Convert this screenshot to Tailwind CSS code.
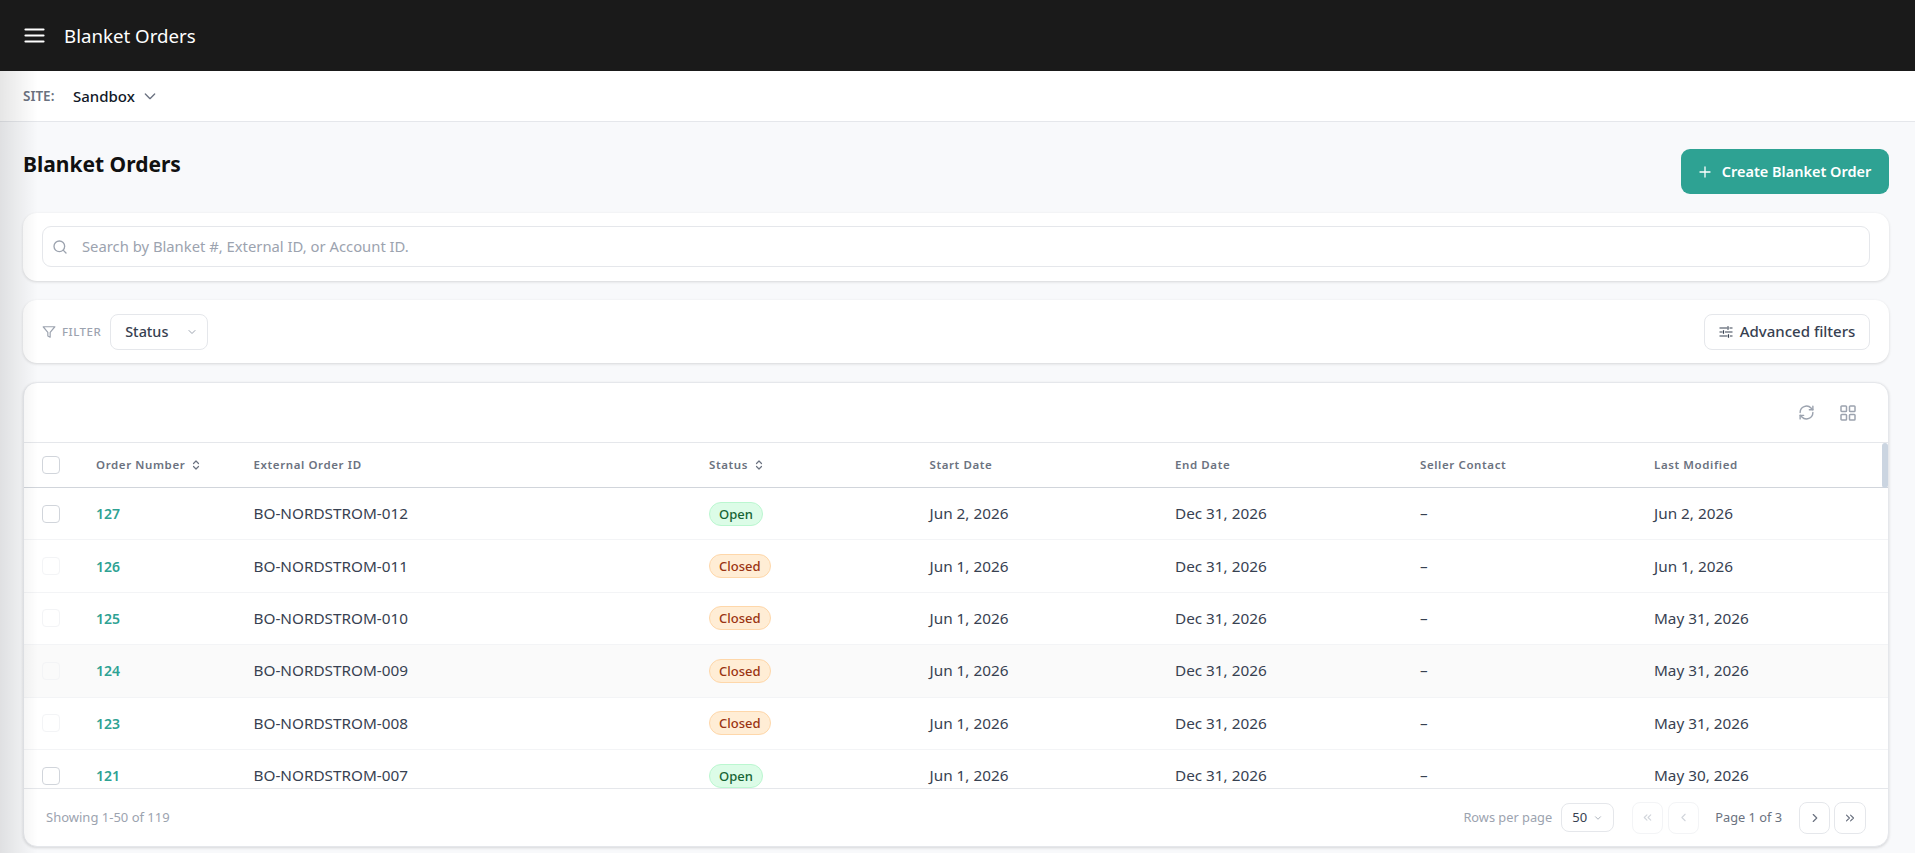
<!DOCTYPE html>
<html>
<head>
<meta charset="utf-8">
<title>Blanket Orders</title>
<script src="https://cdn.jsdelivr.net/npm/@tailwindcss/browser@4"></script>
</head>
<body class="h-[853px] w-[1915px] overflow-hidden bg-[#f8f9fb] font-['Noto_Sans',sans-serif] text-[#111827]">
<div class="relative flex h-[853px] flex-col">
  <header class="flex h-[71px] shrink-0 items-center gap-[19px] bg-[#1a1a1a] pl-[24px] text-white">
    <svg class="h-[21px] w-[21px]" viewBox="0 0 21 21" fill="none" stroke="currentColor" stroke-width="2.2" stroke-linecap="round"><path d="M1.5 4.5h18M1.5 10.5h18M1.5 16.5h18"/></svg>
    <span class="text-[18.7px] leading-[28px]">Blanket Orders</span>
  </header>
  <div class="flex h-[51px] shrink-0 items-center border-b border-[#e5e7eb] bg-white pl-[23px]">
    <span class="w-[50px] text-[13.5px] font-semibold text-[#6b7280]">SITE:</span>
    <span class="text-[15px] font-medium text-[#111827]">Sandbox</span>
    <svg class="ml-[7px] h-[16px] w-[16px] text-[#6b7280]" viewBox="0 0 24 24" fill="none" stroke="currentColor" stroke-width="2" stroke-linecap="round" stroke-linejoin="round"><path d="m5 9 7 7 7-7"/></svg>
  </div>
  <main class="flex min-h-0 flex-1 flex-col px-[23px] pt-[27px] pr-[26px]">
    <div class="flex h-[64px] shrink-0 items-start justify-between">
      <h1 class="text-[21px] leading-[31px] font-bold text-[#111111]">Blanket Orders</h1>
      <button class="flex h-[45px] w-[208px] items-center justify-center gap-[11px] rounded-[9px] bg-[#2ea293] text-[14.5px] font-semibold text-white">
        <svg class="h-[12px] w-[12px]" viewBox="0 0 12 12" fill="none" stroke="currentColor" stroke-width="1.3" stroke-linecap="round"><path d="M6 1v10M1 6h10"/></svg>
        Create Blanket Order
      </button>
    </div>
    <section class="h-[68px] shrink-0 rounded-[14px] bg-white px-[19px] py-[13px] shadow-[0_1px_3px_rgba(0,0,0,0.14)]">
      <div class="flex h-[41px] items-center rounded-[9px] border border-[#e5e7eb] pl-[9px]">
        <svg class="h-[16px] w-[16px] text-[#9ca3af]" viewBox="0 0 24 24" fill="none" stroke="currentColor" stroke-width="2" stroke-linecap="round"><circle cx="11" cy="11" r="8"/><path d="m21 21-4.3-4.3"/></svg>
        <span class="ml-[14px] text-[14.8px] text-[#9ca3af]">Search by Blanket #, External ID, or Account ID.</span>
      </div>
    </section>
    <section class="mt-[19px] flex h-[63px] shrink-0 items-center justify-between rounded-[14px] bg-white pr-[19px] pl-[19px] shadow-[0_1px_3px_rgba(0,0,0,0.14)]">
      <div class="flex items-center">
        <svg class="h-[14px] w-[14px] text-[#9ca3af]" viewBox="0 0 24 24" fill="none" stroke="currentColor" stroke-width="2" stroke-linecap="round" stroke-linejoin="round"><path d="M22 3H2l8 9.5V19l4 2v-8.5z"/></svg>
        <span class="ml-[6px] text-[11.5px] font-medium tracking-[0.5px] text-[#9ca3af]">FILTER</span>
        <div class="ml-[9px] flex h-[36px] w-[98px] items-center justify-between rounded-[8px] border border-[#e5e7eb] pr-[9px] pl-[14px] text-[14.4px] font-medium text-[#374151]">
          Status
          <svg class="h-[12px] w-[12px] text-[#9ca3af]" viewBox="0 0 24 24" fill="none" stroke="currentColor" stroke-width="2" stroke-linecap="round" stroke-linejoin="round"><path d="m6 9 6 6 6-6"/></svg>
        </div>
      </div>
      <button class="flex h-[36px] w-[166px] items-center justify-center gap-[7px] rounded-[8px] border border-[#e5e7eb] text-[15px] font-medium text-[#374151]">
        <svg class="h-[14px] w-[14px]" viewBox="0 0 14 14" fill="none" stroke="currentColor" stroke-width="1.2"><path d="M.5 3h7.5M10.5 3h3M9 1.3v3.4M.5 7h3M6 7h7.5M4.5 5.3v3.4M.5 11h8M11 11h2.5M9.5 9.3v3.4"/></svg>
        Advanced filters
      </button>
    </section>
    <section class="relative mt-[19px] flex h-[465px] shrink-0 flex-col overflow-hidden rounded-[14px] border border-[#e5e7eb] bg-white shadow-[0_1px_3px_rgba(0,0,0,0.14)]">
      <div class="flex h-[60px] shrink-0 items-center justify-end gap-[25px] border-b border-[#e5e7eb] pr-[32px] text-[#9ca3af]">
        <svg class="h-[17px] w-[17px]" viewBox="0 0 24 24" fill="none" stroke="currentColor" stroke-width="2" stroke-linecap="round" stroke-linejoin="round"><path d="M3 12a9 9 0 0 1 15.5-6.2L21 8"/><path d="M21 3v5h-5"/><path d="M21 12a9 9 0 0 1-15.5 6.2L3 16"/><path d="M8 16H3v5"/></svg>
        <svg class="h-[16px] w-[16px]" viewBox="0 0 16 16" fill="none" stroke="currentColor" stroke-width="1.5"><rect x="1" y="1" width="5.5" height="5.5" rx=".8"/><rect x="9.5" y="1" width="5.5" height="5.5" rx=".8"/><rect x="1" y="9.5" width="5.5" height="5.5" rx=".8"/><rect x="9.5" y="9.5" width="5.5" height="5.5" rx=".8"/></svg>
      </div>
      <div class="min-h-0 flex-1 overflow-hidden">
        <div class="grid h-[45px] grid-cols-[54px_157.5px_455.5px_220.5px_245.5px_245px_234px_1fr] items-center border-b border-[#d1d5db] pl-[18px] text-[11.5px] font-semibold tracking-[0.6px] text-[#6b7280]">
          <span class="h-[18px] w-[18px] rounded-[4px] border border-[#d1d5db]"></span>
          <span class="flex items-center gap-[5px]">Order Number
            <svg class="h-[12px] w-[12px]" viewBox="0 0 24 24" fill="none" stroke="currentColor" stroke-width="2.4" stroke-linecap="round" stroke-linejoin="round"><path d="m7 9 5-5 5 5M7 15l5 5 5-5"/></svg></span>
          <span>External Order ID</span>
          <span class="flex items-center gap-[5px]">Status
            <svg class="h-[12px] w-[12px]" viewBox="0 0 24 24" fill="none" stroke="currentColor" stroke-width="2.4" stroke-linecap="round" stroke-linejoin="round"><path d="m7 9 5-5 5 5M7 15l5 5 5-5"/></svg></span>
          <span>Start Date</span><span>End Date</span><span>Seller Contact</span><span>Last Modified</span>
        </div>
        <div class="grid h-[52.4px] grid-cols-[54px_157.5px_455.5px_220.5px_245.5px_245px_234px_1fr] items-center border-b border-[#f3f4f6] pl-[18px] text-[15.3px] text-[#374151]">
          <span class="h-[18px] w-[18px] rounded-[4px] border border-[#d1d5db]"></span>
          <span class="text-[14px] font-semibold text-[#2ea293]">127</span><span>BO-NORDSTROM-012</span>
          <span><span class="inline-block h-[24px] rounded-full border border-[#bbf7d0] bg-[#dcfce7] px-[9px] text-[13px] leading-[23px] font-medium text-[#166534]">Open</span></span>
          <span>Jun 2, 2026</span><span>Dec 31, 2026</span><span>–</span><span>Jun 2, 2026</span>
        </div>
        <div class="grid h-[52.4px] grid-cols-[54px_157.5px_455.5px_220.5px_245.5px_245px_234px_1fr] items-center border-b border-[#f3f4f6] pl-[18px] text-[15.3px] text-[#374151]">
          <span class="h-[18px] w-[18px] rounded-[4px] border border-[#f3f4f6]"></span>
          <span class="text-[14px] font-semibold text-[#2ea293]">126</span><span>BO-NORDSTROM-011</span>
          <span><span class="inline-block h-[24px] rounded-full border border-[#fed7aa] bg-[#ffedd5] px-[9px] text-[13px] leading-[23px] font-medium text-[#9a3412]">Closed</span></span>
          <span>Jun 1, 2026</span><span>Dec 31, 2026</span><span>–</span><span>Jun 1, 2026</span>
        </div>
        <div class="grid h-[52.4px] grid-cols-[54px_157.5px_455.5px_220.5px_245.5px_245px_234px_1fr] items-center border-b border-[#f3f4f6] pl-[18px] text-[15.3px] text-[#374151]">
          <span class="h-[18px] w-[18px] rounded-[4px] border border-[#f3f4f6]"></span>
          <span class="text-[14px] font-semibold text-[#2ea293]">125</span><span>BO-NORDSTROM-010</span>
          <span><span class="inline-block h-[24px] rounded-full border border-[#fed7aa] bg-[#ffedd5] px-[9px] text-[13px] leading-[23px] font-medium text-[#9a3412]">Closed</span></span>
          <span>Jun 1, 2026</span><span>Dec 31, 2026</span><span>–</span><span>May 31, 2026</span>
        </div>
        <div class="grid h-[52.4px] grid-cols-[54px_157.5px_455.5px_220.5px_245.5px_245px_234px_1fr] items-center border-b border-[#f3f4f6] bg-[#fafafa] pl-[18px] text-[15.3px] text-[#374151]">
          <span class="h-[18px] w-[18px] rounded-[4px] border border-[#f3f4f6]"></span>
          <span class="text-[14px] font-semibold text-[#2ea293]">124</span><span>BO-NORDSTROM-009</span>
          <span><span class="inline-block h-[24px] rounded-full border border-[#fed7aa] bg-[#ffedd5] px-[9px] text-[13px] leading-[23px] font-medium text-[#9a3412]">Closed</span></span>
          <span>Jun 1, 2026</span><span>Dec 31, 2026</span><span>–</span><span>May 31, 2026</span>
        </div>
        <div class="grid h-[52.4px] grid-cols-[54px_157.5px_455.5px_220.5px_245.5px_245px_234px_1fr] items-center border-b border-[#f3f4f6] pl-[18px] text-[15.3px] text-[#374151]">
          <span class="h-[18px] w-[18px] rounded-[4px] border border-[#f3f4f6]"></span>
          <span class="text-[14px] font-semibold text-[#2ea293]">123</span><span>BO-NORDSTROM-008</span>
          <span><span class="inline-block h-[24px] rounded-full border border-[#fed7aa] bg-[#ffedd5] px-[9px] text-[13px] leading-[23px] font-medium text-[#9a3412]">Closed</span></span>
          <span>Jun 1, 2026</span><span>Dec 31, 2026</span><span>–</span><span>May 31, 2026</span>
        </div>
        <div class="grid h-[52.4px] grid-cols-[54px_157.5px_455.5px_220.5px_245.5px_245px_234px_1fr] items-center border-b border-[#f3f4f6] pl-[18px] text-[15.3px] text-[#374151]">
          <span class="h-[18px] w-[18px] rounded-[4px] border border-[#d1d5db]"></span>
          <span class="text-[14px] font-semibold text-[#2ea293]">121</span><span>BO-NORDSTROM-007</span>
          <span><span class="inline-block h-[24px] rounded-full border border-[#bbf7d0] bg-[#dcfce7] px-[9px] text-[13px] leading-[23px] font-medium text-[#166534]">Open</span></span>
          <span>Jun 1, 2026</span><span>Dec 31, 2026</span><span>–</span><span>May 30, 2026</span>
        </div>
      </div>
      <div class="flex h-[58px] shrink-0 items-center justify-between border-t border-[#e5e7eb] pr-[22px] pl-[22px] text-[13px] text-[#9ca3af]">
        <span>Showing 1-50 of 119</span>
        <div class="flex items-center">
          <span class="text-[12.8px]">Rows per page</span>
          <span class="ml-[9px] flex h-[29px] w-[53px] items-center gap-[6px] rounded-[8px] border border-[#e5e7eb] pl-[10px] text-[#374151]">50
            <svg class="h-[10px] w-[10px] text-[#9ca3af]" viewBox="0 0 24 24" fill="none" stroke="currentColor" stroke-width="2" stroke-linecap="round" stroke-linejoin="round"><path d="m6 9 6 6 6-6"/></svg></span>
          <span class="ml-[18px] flex h-[32px] w-[31px] items-center justify-center rounded-[8px] border border-[#f3f4f6] text-[#d1d5db]"><svg class="h-[13px] w-[13px]" viewBox="0 0 24 24" fill="none" stroke="currentColor" stroke-width="2" stroke-linecap="round" stroke-linejoin="round"><path d="m11 17-5-5 5-5M18 17l-5-5 5-5"/></svg></span>
          <span class="ml-[5px] flex h-[32px] w-[31px] items-center justify-center rounded-[8px] border border-[#f3f4f6] text-[#d1d5db]"><svg class="h-[13px] w-[13px]" viewBox="0 0 24 24" fill="none" stroke="currentColor" stroke-width="2" stroke-linecap="round" stroke-linejoin="round"><path d="m15 18-6-6 6-6"/></svg></span>
          <span class="ml-[16px] text-[12.8px] text-[#6b7280]">Page 1 of 3</span>
          <span class="ml-[17px] flex h-[32px] w-[31px] items-center justify-center rounded-[8px] border border-[#e5e7eb] text-[#6b7280]"><svg class="h-[14px] w-[14px]" viewBox="0 0 24 24" fill="none" stroke="currentColor" stroke-width="2" stroke-linecap="round" stroke-linejoin="round"><path d="m9 18 6-6-6-6"/></svg></span>
          <span class="ml-[4px] flex h-[32px] w-[32px] items-center justify-center rounded-[8px] border border-[#e5e7eb] text-[#6b7280]"><svg class="h-[14px] w-[14px]" viewBox="0 0 24 24" fill="none" stroke="currentColor" stroke-width="2" stroke-linecap="round" stroke-linejoin="round"><path d="m6 17 5-5-5-5M13 17l5-5-5-5"/></svg></span>
        </div>
      </div>
      <div class="absolute top-[60px] right-0 h-[45px] w-[6px] rounded-full bg-[#cbd5e1]"></div>
    </section>
  </main>
  <div class="pointer-events-none absolute top-[71px] bottom-0 left-0 w-[38px] bg-gradient-to-r from-black/10 to-transparent"></div>
</div>
</body>
</html>
